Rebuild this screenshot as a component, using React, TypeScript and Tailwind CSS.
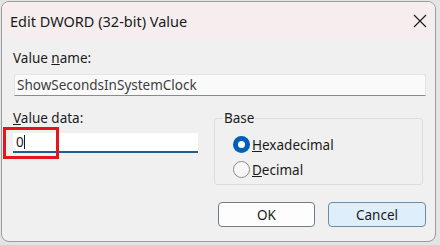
import React from 'react';

const Radio: React.FC<{ checked?: boolean; label: React.ReactNode }> = ({ checked, label }) => (
    <div className="flex items-center h-[25px]">
        {checked ? (
            <span className="w-[17px] h-[17px] rounded-full bg-[#005fb8] flex items-center justify-center">
                <span className="w-[7px] h-[7px] rounded-full bg-white" />
            </span>
        ) : (
            <span className="w-[17px] h-[17px] rounded-full border border-[#8a8a8a] bg-[#f7f7f7]" />
        )}
        <span className="ml-[2px] text-[13.5px] text-[#1b1b1b]">{label}</span>
    </div>
);

export default function App() {
    return (
        <div className="w-[440px] h-[245px] bg-[#e4e4e4] overflow-hidden" style={{ fontFamily: '"Noto Sans", "Open Sans", sans-serif' }}>
            <div className="ml-[1px] mt-[1px] w-[435px] h-[241px] rounded-[8px] border border-[#9c9c9c] bg-[#f0f0f0] overflow-hidden flex flex-col">
                {/* title bar */}
                <div className="h-[37px] flex-shrink-0 bg-[#f6eeee] flex items-center justify-between pl-[8px] pr-[7px]">
                    <span className="text-[14.5px] text-[#1a1a1a] leading-none mt-[1px]">Edit DWORD (32-bit) Value</span>
                    <svg width="14" height="14" viewBox="0 0 14 14" className="mr-[1px]">
                        <path d="M1 1 L13 13 M13 1 L1 13" stroke="#1a1a1a" strokeWidth="1.1" />
                    </svg>
                </div>

                {/* body */}
                <div className="flex-grow flex flex-col pt-[10px] px-[12px] text-[13.5px] leading-[18px] text-[#1b1b1b]">
                    <div className="ml-[-1px]">Value <u>n</u>ame:</div>
                    <div className="mt-[7px] h-[22px] w-[412px] bg-[#fafafa] border-b border-[#8b8b8b] border-x border-t border-x-[#e5e5e5] border-t-[#e5e5e5] rounded-t-[3px] flex items-center pl-[2px] text-[#3d3d3d]">
                        ShowSecondsInSystemClock
                    </div>

                    <div className="mt-[13px] flex">
                        <div className="w-[184px] relative">
                            <div className="ml-[-1px]">
                                <u>V</u>alue data:
                            </div>
                            <div className="mt-[6px] h-[20px] w-[185px] ml-[-1px] bg-white border-b-2 border-[#1e5f8f] flex items-center pl-[3px]">
                                <span>0</span>
                                <span className="w-[1px] h-[14px] bg-[#1b1b1b]" />
                            </div>
                            <div className="absolute left-[-11px] top-[18px] w-[56px] h-[32px] border-[3px] border-[#e3151f]" />
                        </div>

                        <fieldset className="ml-[16px] w-[215px] h-[76px] border border-[#dcdcdc] rounded-[3px] px-[18px] mt-0">
                            <legend className="ml-[-10px] px-[1px]">Base</legend>
                            <div className="mt-[5px]">
                                <Radio checked label={<><u>H</u>exadecimal</>} />
                                <Radio label={<><u>D</u>ecimal</>} />
                            </div>
                        </fieldset>
                    </div>

                    <div className="mt-[17px] flex justify-end gap-[13px]">
                        <button className="w-[97px] h-[25px] rounded-[4px] border border-[#6f7c86] bg-[#fdfdfd] text-[13.5px] text-[#1b1b1b]">OK</button>
                        <button className="w-[98px] h-[25px] rounded-[4px] border border-[#6d8ba3] bg-[#dfeefb] text-[13.5px] text-[#1b1b1b] mr-[-3px]">Cancel</button>
                    </div>
                </div>
            </div>
        </div>
    );
}
